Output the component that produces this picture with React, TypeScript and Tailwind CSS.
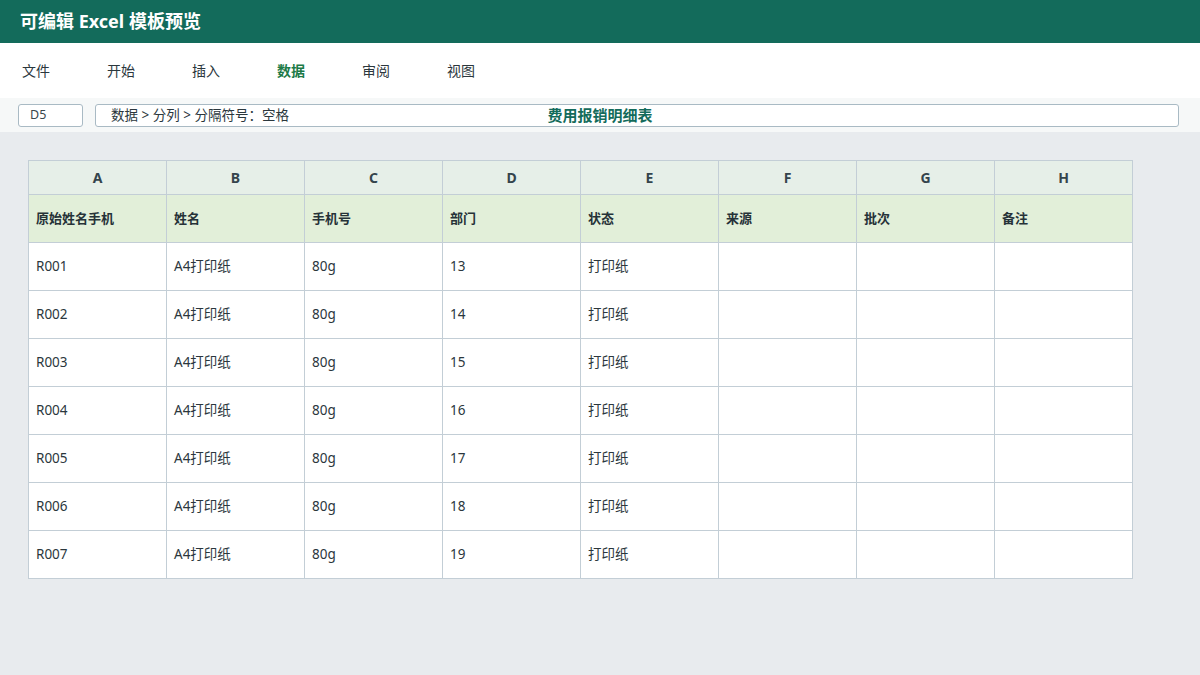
import React from 'react';

const cols = ['A', 'B', 'C', 'D', 'E', 'F', 'G', 'H'];
const fields = ['原始姓名手机', '姓名', '手机号', '部门', '状态', '来源', '批次', '备注'];
const rows = [1, 2, 3, 4, 5, 6, 7].map((n) => [
  `R00${n}`,
  'A4打印纸',
  '80g',
  String(12 + n),
  '打印纸',
  '',
  '',
  '',
]);
const tabs = ['文件', '开始', '插入', '数据', '审阅', '视图'];

const App = () => {
  return (
    <div
      className="w-[1200px] h-[675px] flex flex-col bg-[#e8ebee] text-[#2b373d] overflow-hidden"
      style={{ fontFamily: '"Noto Sans", "Noto Sans CJK SC", sans-serif' }}
    >
      <div className="h-[43px] bg-[#136b5b] flex items-center px-5">
        <h1 className="text-white text-[18px] font-bold">可编辑 Excel 模板预览</h1>
      </div>
      <div className="h-[55px] bg-white flex items-center pl-[22px]">
        {tabs.map((t) => (
          <span
            key={t}
            className={`w-[85px] text-[14px] ${t === '数据' ? 'font-bold text-[#1d7a47]' : 'text-[#2b373d]'}`}
          >
            {t}
          </span>
        ))}
      </div>
      <div className="relative h-[34px] bg-[#f6f8f8] flex items-center pl-[18px] pr-[21px] gap-3">
        <div className="w-[65px] h-[23px] bg-white border border-[#a9bac4] rounded-[3px] flex items-center pl-[11px] text-[12.5px] text-[#3a474d]">
          D5
        </div>
        <div className="flex-1 h-[23px] bg-white border border-[#a9bac4] rounded-[3px] flex items-center pl-[15px] text-[13.5px]">
          数据 &gt; 分列 &gt; 分隔符号：空格
        </div>
        <div className="absolute left-0 right-0 top-0 h-full flex items-center justify-center pointer-events-none">
          <span className="text-[15px] font-bold text-[#136b5b]">费用报销明细表</span>
        </div>
      </div>
      <div className="pt-[28px] pl-[28px]">
        <div className="w-[1105px] border-l border-t border-[#c3ced6]">
          <div className="grid grid-cols-8 h-[34px] bg-[#e6efe8]">
            {cols.map((c) => (
              <div
                key={c}
                className="border-r border-b border-[#c3ced6] flex items-center justify-center text-[14px] font-bold text-[#34444c]"
              >
                {c}
              </div>
            ))}
          </div>
          <div className="grid grid-cols-8 h-[48px] bg-[#e2efd9]">
            {fields.map((f) => (
              <div
                key={f}
                className="border-r border-b border-[#c3ced6] flex items-center pl-[7px] text-[13px] font-bold text-[#263238]"
              >
                {f}
              </div>
            ))}
          </div>
          {rows.map((r, i) => (
            <div key={i} className="grid grid-cols-8 h-[48px] bg-white">
              {r.map((v, j) => (
                <div
                  key={j}
                  className="border-r border-b border-[#c3ced6] flex items-center pl-[7px] text-[13.5px] text-[#2b373d]"
                >
                  {v}
                </div>
              ))}
            </div>
          ))}
        </div>
      </div>
    </div>
  );
};

export default App;
